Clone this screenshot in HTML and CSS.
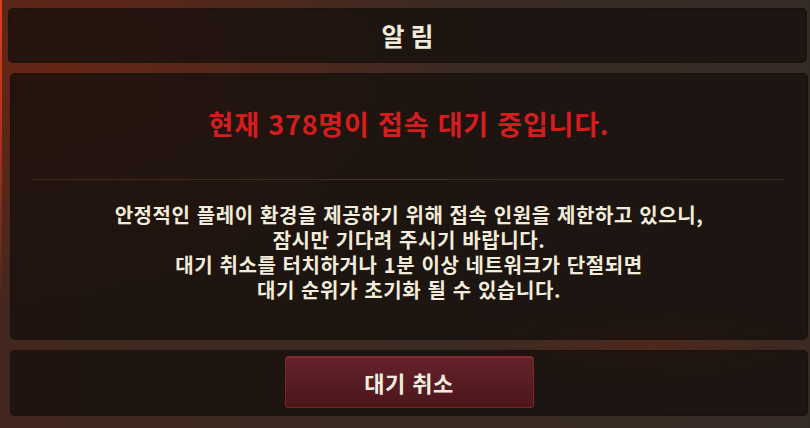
FILE: index.html
```html
<!DOCTYPE html>
<html lang="ko">
<head>
<meta charset="utf-8">
<link rel="stylesheet" href="styles.css">
</head>
<body>
<div class="screen">
  <header class="panel title-panel"><h1 class="title">알 림</h1></header>
  <section class="panel main-panel">
    <h2 class="headline">현재 378명이 접속 대기 중입니다.</h2>
    <hr class="divider">
    <p class="message">안정적인 플레이 환경을 제공하기 위해 접속 인원을 제한하고 있으니,<br>잠시만 기다려 주시기 바랍니다.<br>대기 취소를 터치하거나 1분 이상 네트워크가 단절되면<br>대기 순위가 초기화 될 수 있습니다.</p>
  </section>
  <footer class="panel footer-panel"><button class="cancel-btn">대기 취소</button></footer>
</div>
</body>
</html>
```
FILE: styles.css
```css
html, body {
  margin: 0;
  padding: 0;
}
body {
  width: 810px;
  height: 428px;
  overflow: hidden;
  font-family: "Noto Sans CJK KR", "Noto Sans", sans-serif;
  background:
    radial-gradient(ellipse 420px 240px at 60px 70px, rgba(125, 36, 16, 0.6), rgba(125, 36, 16, 0) 100%),
    radial-gradient(ellipse 200px 40px at 650px 345px, rgba(110, 36, 20, 0.45), rgba(110, 36, 20, 0) 100%),
    linear-gradient(90deg, #43271e 0%, #3a2a22 45%, #352b25 100%);
  position: relative;
}
body::before {
  content: "";
  position: absolute;
  left: 0;
  top: 0;
  width: 2px;
  height: 300px;
  background: linear-gradient(180deg, #d8421a 0%, #b8381a 35%, rgba(150, 50, 25, 0) 100%);
}
.screen {
  display: flex;
  flex-direction: column;
  gap: 10px;
  padding: 8px 2px 0 10px;
  height: 428px;
  box-sizing: border-box;
}
.panel {
  background: rgba(22, 16, 13, 0.8);
  border-radius: 5px;
  box-shadow: inset 0 0 0 1px rgba(0, 0, 0, 0.15);
}
.title-panel {
  margin: 0 1px 0 -2px;
  height: 55px;
  display: flex;
  align-items: center;
  justify-content: center;
}
.title {
  margin: 0;
  font-size: 25px;
  font-weight: 700;
  color: #f1ebd9;
  word-spacing: -1px;
  line-height: 30px;
  padding-bottom: 1px;
}
.main-panel {
  height: 267px;
  box-sizing: border-box;
  padding-top: 32px;
  display: flex;
  flex-direction: column;
  align-items: center;
}
.headline {
  margin: 0;
  font-size: 27px;
  line-height: 38px;
  letter-spacing: 0.8px;
  font-weight: 700;
  color: #d51d1d;
}
.divider {
  align-self: stretch;
  margin: 36px 24px 0 22px;
  border: 0;
  height: 1px;
  background: linear-gradient(90deg, rgba(90, 60, 45, 0.55), rgba(80, 56, 44, 0.7) 50%, rgba(80, 56, 44, 0.5));
}
.message {
  margin: 22px 0 0;
  font-size: 20px;
  line-height: 25px;
  letter-spacing: 0.6px;
  font-weight: 700;
  color: #f2ecda;
  text-align: center;
}
.footer-panel {
  height: 66px;
  display: flex;
  align-items: center;
  justify-content: center;
  padding-bottom: 2px;
  box-sizing: border-box;
}
.cancel-btn {
  width: 249px;
  height: 52px;
  border: 1px solid #7e2426;
  border-radius: 3px;
  background: linear-gradient(180deg, #66222a 0%, #561c21 55%, #4b171b 100%);
  box-shadow: inset 0 1px 0 rgba(190, 60, 60, 0.45);
  font-family: "Noto Sans CJK KR", "Noto Sans", sans-serif;
  font-size: 22px;
  letter-spacing: 0.5px;
  font-weight: 700;
  color: #f3ede0;
  padding: 0;
  line-height: 1;
}
```
